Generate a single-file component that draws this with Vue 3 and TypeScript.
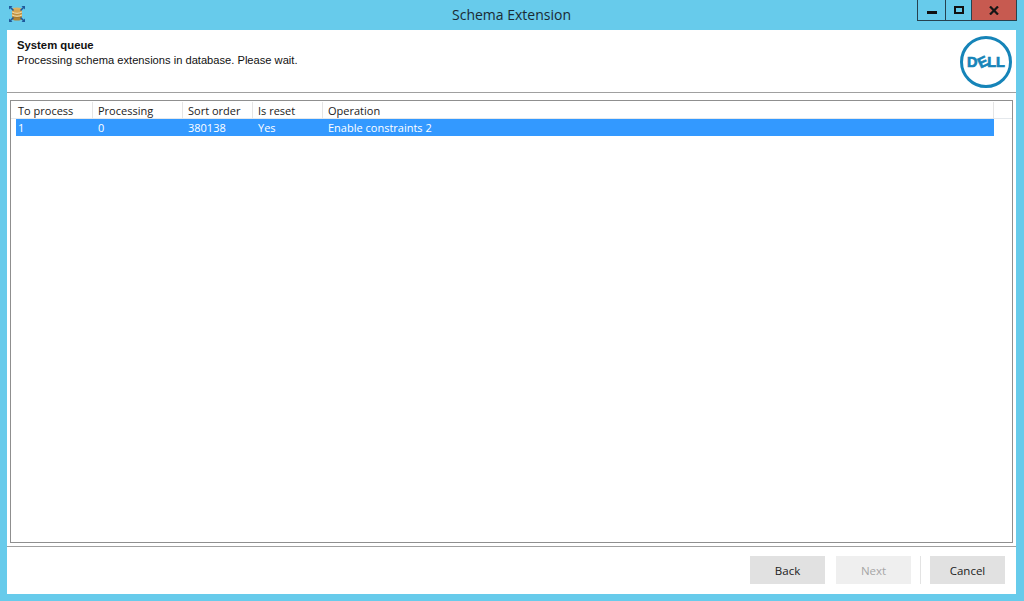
<script setup lang="ts">
interface Column { label: string; width: number; value: string }
const columns: Column[] = [
  { label: 'To process', width: 77, value: '1' },
  { label: 'Processing', width: 90, value: '0' },
  { label: 'Sort order', width: 70, value: '380138' },
  { label: 'Is reset', width: 70, value: 'Yes' },
  { label: 'Operation', width: 671, value: 'Enable constraints 2' }
]
</script>

<template>
  <div class="window">
    <div class="titlebar">
      <svg class="app-icon" width="16" height="16" viewBox="0 0 16 16">
        <ellipse cx="8" cy="3.500" rx="5" ry="2" fill="#d9b26a" />
        <rect x="3" y="3.500" width="10" height="9" fill="#d6a552" />
        <ellipse cx="8" cy="12.500" rx="5" ry="2" fill="#b08435" />
        <path d="M3 6c2 1.800 8 1.800 10 0M3 9c2 1.800 8 1.800 10 0" stroke="#f5e6b8" fill="none" />
        <path d="M3 6c2 1.800 8 1.800 10 0M3 9c2 1.800 8 1.800 10 0" stroke="#8d6a2c" stroke-width="0.500" fill="none" transform="translate(0 1)" />
        <path d="M0 0h3.500L0 3.500zM16 0h-3.500L16 3.500zM0 16h3.500L0 12.500zM16 16h-3.500L16 12.500z" fill="#1f5a9c" />
        <path d="M1 1l3.500 3.500M15 1l-3.500 3.500M1 15l3.500-3.500M15 15l-3.500-3.500" stroke="#1f5a9c" stroke-width="1.500" />
      </svg>
      <div class="title">Schema Extension</div>
      <div class="controls">
        <div class="ctl min"><span class="min-glyph"></span></div>
        <div class="ctl max"><span class="max-glyph"></span></div>
        <div class="ctl close">
          <svg width="10" height="9" viewBox="0 0 10 9"><path d="M1 0.500l8 8M9 0.500l-8 8" stroke="#161616" stroke-width="2.200" /></svg>
        </div>
      </div>
    </div>
    <div class="client">
      <header class="head">
        <div class="head-text">
          <div class="head-title">System queue</div>
          <div class="head-sub">Processing schema extensions in database. Please wait.</div>
        </div>
        <div class="logo"><span class="logo-text">D<span class="e">E</span>LL</span></div>
      </header>
      <main class="main">
        <div class="list">
          <div class="cols">
            <div v-for="c in columns" :key="c.label" class="col" :style="{ width: c.width + 'px' }">{{ c.label }}</div>
          </div>
          <div class="row">
            <div v-for="c in columns" :key="c.label" class="cell" :style="{ width: c.width + 'px' }">{{ c.value }}</div>
          </div>
        </div>
      </main>
      <footer class="foot">
        <button class="btn">Back</button>
        <button class="btn next" disabled>Next</button>
        <span class="sep"></span>
        <button class="btn">Cancel</button>
      </footer>
    </div>
  </div>
</template>

<style>
html, body { margin: 0; padding: 0; }
</style>

<style scoped>
.window {
  width: 1024px;
  height: 601px;
  box-sizing: border-box;
  background: #67cbeb;
  padding: 0 8px 7px 7px;
  display: flex;
  flex-direction: column;
  font-family: "Open Sans", "Noto Sans", sans-serif;
  color: #111;
  overflow: hidden;
}
.titlebar {
  height: 30px;
  flex: none;
  display: flex;
  align-items: flex-start;
  position: relative;
}
.app-icon { margin: 6px 0 0 2px; }
.title {
  position: absolute;
  left: 0;
  right: 0;
  top: 5px;
  text-align: center;
  font-size: 14px;
  line-height: 20px;
  color: #1a2a33;
}
.controls {
  position: absolute;
  right: -1px;
  top: 0;
  display: flex;
  height: 21px;
  border: 1px solid #26424f;
  border-top: 0;
  box-sizing: border-box;
}
.ctl { display: flex; align-items: center; justify-content: center; box-sizing: border-box; }
.min { width: 28px; border-right: 1px solid #26424f; }
.max { width: 26px; border-right: 1px solid #26424f; }
.close { width: 44px; background: #c75a50; }
.min-glyph { width: 10px; height: 3px; background: #111; margin-top: 5px; }
.max-glyph { border: 2px solid #111; width: 6px; height: 4px; }
.client {
  flex: 1;
  background: #fff;
  display: flex;
  flex-direction: column;
  min-height: 0;
}
.head {
  height: 63px;
  flex: none;
  box-sizing: border-box;
  border-bottom: 1px solid #a0a0a0;
  display: flex;
  justify-content: space-between;
  padding: 8px 4px 0 10px;
}
.head-title { font-size: 11.300px; font-weight: 700; line-height: 15px; font-family: "Liberation Sans", sans-serif; }
.head-sub { font-size: 11.150px; line-height: 15px; font-family: "Liberation Sans", sans-serif; }
.logo {
  width: 52px;
  height: 52px;
  box-sizing: border-box;
  border: 3px solid #1684b8;
  border-radius: 50%;
  margin-top: -2px;
  display: flex;
  align-items: center;
  justify-content: center;
}
.logo-text {
  font-family: "Liberation Sans", sans-serif;
  font-weight: 700;
  font-size: 14.500px;
  line-height: 1;
  color: #1684b8;
  -webkit-text-stroke: 0.700px #1684b8;
  white-space: nowrap;
}
.e { display: inline-block; transform: rotate(-25deg); }
.main {
  flex: 1;
  min-height: 0;
  padding: 7px 3px 3px 3px;
  display: flex;
  border-bottom: 1px solid #a0a0a0;
}
.list {
  flex: 1;
  box-sizing: border-box;
  border: 1px solid #8f8f8f;
  padding: 1px 0 0 5px;
}
.cols {
  height: 16px;
  display: flex;
  border-bottom: 1px solid #e4e8ec;
  margin-left: -5px;
  padding-left: 5px;
}
.col {
  box-sizing: border-box;
  height: 17px;
  padding-left: 5px;
  border-right: 1px solid #e5e5e5;
  font-size: 11px;
  line-height: 17px;
  color: #222;
  white-space: nowrap;
}
.col:first-child, .cell:first-child { padding-left: 2px; }
.row {
  width: 978px;
  height: 17px;
  background: #3399ff;
  display: flex;
}
.cell {
  box-sizing: border-box;
  padding-left: 5px;
  font-size: 11px;
  line-height: 17px;
  color: #fff;
  white-space: nowrap;
}
.foot {
  height: 47px;
  flex: none;
  box-sizing: border-box;
  padding: 9px 11px 10px 0;
  display: flex;
  justify-content: flex-end;
}
.btn {
  width: 75px;
  height: 28px;
  border: 0;
  padding: 0;
  margin-left: 11px;
  background: #e1e1e1;
  color: #222;
  font-family: inherit;
  font-size: 11.500px;
}
.next { background: #efefef; color: #a6a6a6; }
.sep { width: 1px; height: 28px; background: #e3e3e3; margin: 0 -2px 0 9px; }
</style>
